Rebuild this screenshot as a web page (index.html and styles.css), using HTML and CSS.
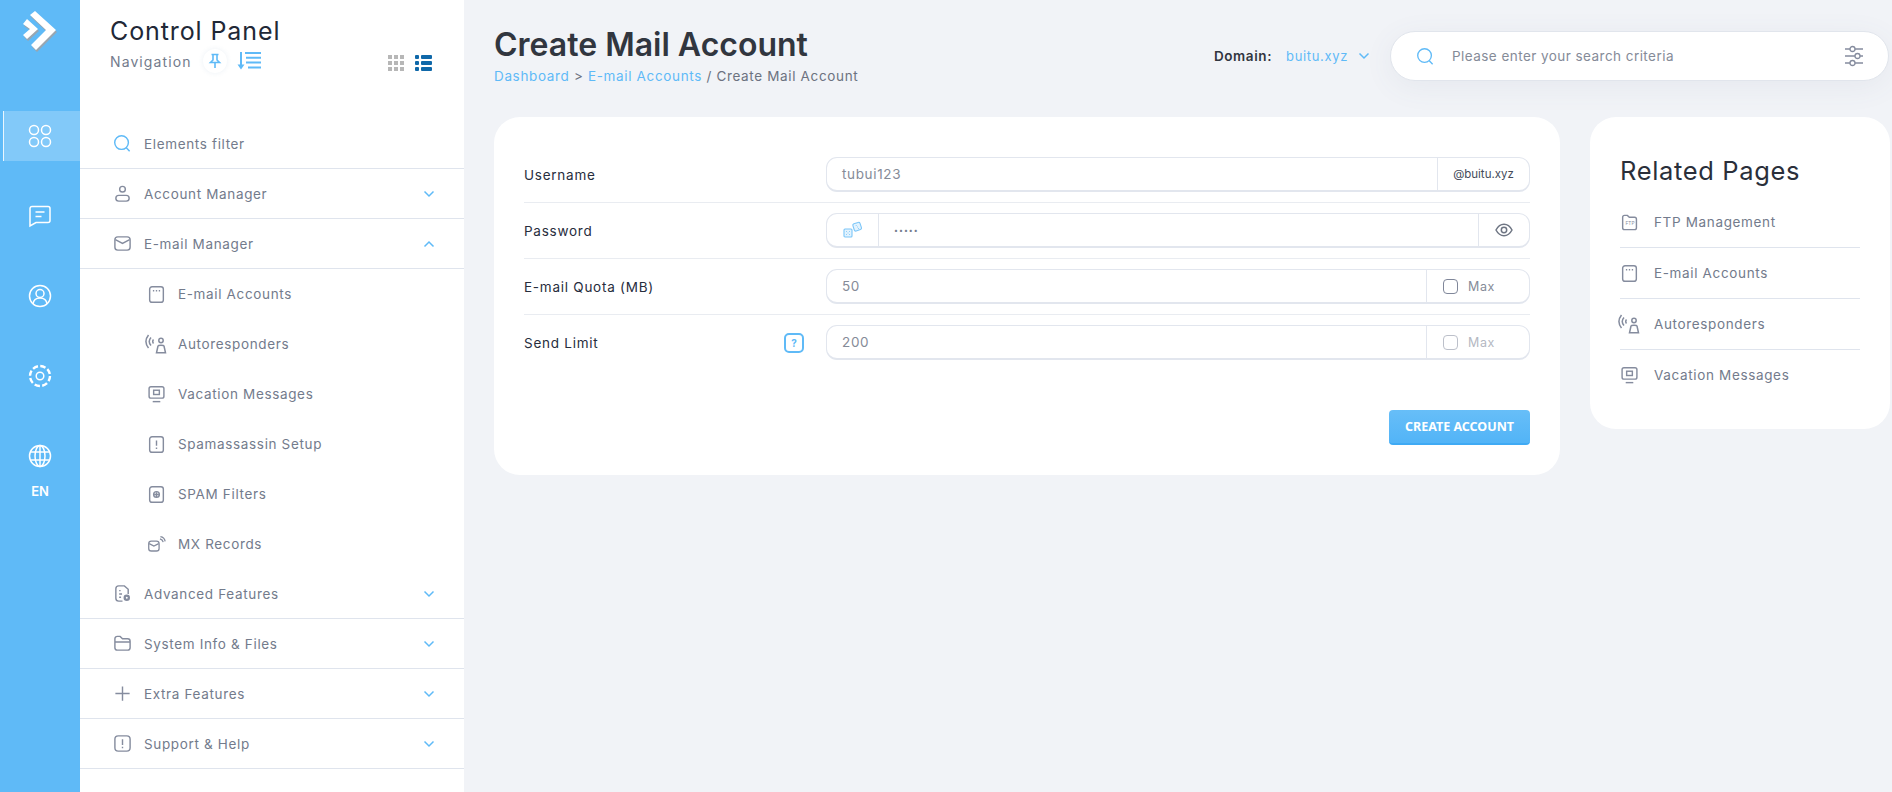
FILE: index.html
```html
<!DOCTYPE html>
<html lang="en">
<head>
    <meta charset="UTF-8">
    <meta name="viewport" content="width=device-width, initial-scale=1.0">
    <title>Create Mail Account</title>
    <link rel="stylesheet" href="styles.css">
</head>
<body>
    <svg class="sprite" xmlns="http://www.w3.org/2000/svg">
        <symbol id="i-search" viewBox="0 0 20 20"><circle cx="9" cy="9" r="7.2"/><path d="M14 14.500l3.500 3.700"/></symbol>
        <symbol id="i-chev" viewBox="0 0 12 8"><path d="M1.500 1.500L6 6l4.500-4.500"/></symbol>
        <symbol id="i-emails" viewBox="0 0 20 20"><rect x="2.800" y="1.800" width="14.400" height="16.400" rx="2.500"/><path class="dots-mark" d="M6.200 6h1.400M9.300 6h1.400M12.400 6h1.400"/></symbol>
        <symbol id="i-auto" viewBox="0 0 22 20"><path d="M3.500 1C.1 5.300.1 9.700 3.500 14M6 3.500C3.800 6 3.800 9 6 11.500M8.500 5.500c-1 1.300-1 2.700 0 4"/><circle cx="16" cy="6.500" r="2.200"/><path d="M13 12c.3-1 5.700-1 6 0l1.500 6.800h-9z"/></symbol>
        <symbol id="i-vacation" viewBox="0 0 20 20"><rect x="2.200" y="1.800" width="15.600" height="12" rx="2"/><rect x="7" y="5.500" width="6" height="4.500"/><path d="M6 17.500h8"/></symbol>
        <symbol id="i-spam" viewBox="0 0 20 20"><rect x="2.800" y="1.800" width="14.400" height="16.400" rx="2.500"/><path d="M10 5.800v5.500M10 13.200v1.500"/></symbol>
        <symbol id="i-filter" viewBox="0 0 20 20"><rect x="2.800" y="1.800" width="14.400" height="16.400" rx="2.500"/><circle cx="10" cy="10" r="3"/><path d="M7.500 10h5M10 7.500v5"/></symbol>
        <symbol id="i-mx" viewBox="0 0 22 20"><rect x="2" y="6" width="12" height="11.500" rx="3"/><path d="M2.500 9l5.500 2.800L13.500 9M15 3.500c2 .4 3.300 1.700 3.800 3.800M15.500 1c3 .5 5 2.500 5.500 5.500"/></symbol>
        <symbol id="i-folder" viewBox="0 0 20 20"><path d="M2.800 4.500a2 2 0 012-2h3l2 2h5.500a2 2 0 012 2v9a2 2 0 01-2 2h-10.500a2 2 0 01-2-2z"/><text x="10.500" y="13" text-anchor="middle" class="ftp-mark">FTP</text></symbol>
    </svg>

    <aside class="rail">
        <div class="rail-logo">
            <svg width="80" height="60" viewBox="0 0 80 60">
                <g fill="#98a6b1" transform="translate(1 2)">
                    <path d="M35 11l21 19-20 20-5-5 15-15-16-15z"/>
                    <path d="M27 19l11 10-11 10-4-4 7-6-7-5z"/>
                </g>
                <path d="M35 11l21 19-20 20-5-5 15-15-16-15z" fill="#fff"/>
                <path d="M27 19l11 10-11 10-4-4 7-6-7-5z" fill="#fff"/>
            </svg>
        </div>
        <a class="rail-item active">
            <svg width="24" height="24" viewBox="0 0 24 24"><circle cx="6" cy="6" r="4.500"/><circle cx="18" cy="6" r="4.500"/><circle cx="6" cy="18" r="4.500"/><circle cx="18" cy="18" r="4.500"/></svg>
        </a>
        <a class="rail-item">
            <svg width="24" height="24" viewBox="0 0 24 24"><path d="M4 2.500h16a2 2 0 012 2v12a2 2 0 01-2 2H8l-6 3.500V4.500a2 2 0 012-2zM7.500 8h9M7.500 12.500h6"/></svg>
        </a>
        <a class="rail-item">
            <svg width="24" height="24" viewBox="0 0 24 24"><circle cx="12" cy="12" r="10.500"/><circle cx="12" cy="9.500" r="4"/><path d="M5 20c.5-4 3-6 7-6s6.500 2 7 6"/></svg>
        </a>
        <a class="rail-item">
            <svg width="24" height="24" viewBox="0 0 24 24"><circle cx="12" cy="12" r="10" stroke-width="2.400" stroke-dasharray="5.500 2.350"/><circle cx="12" cy="12" r="3.800"/></svg>
        </a>
        <a class="rail-item">
            <svg width="24" height="24" viewBox="0 0 24 24"><circle cx="12" cy="12" r="10.500"/><ellipse cx="12" cy="12" rx="5" ry="10.500"/><path d="M12 1.500v21M2.500 8h19M2.500 16h19"/></svg>
        </a>
        <span class="rail-lang">EN</span>
    </aside>

    <nav class="sidebar">
        <div class="side-head">
            <h2>Control Panel</h2>
            <div class="side-sub">
                <span>Navigation</span>
                <span class="pin">
                    <svg width="14" height="16" viewBox="0 0 14 16"><path d="M3.500 1.500h7M5 1.500v5.500L2.500 9.500h9L9 7V1.500M7 9.500V15"/></svg>
                </span>
                <svg class="sort" width="26" height="20" viewBox="0 0 26 20"><path d="M5 1v15"/><path class="sort-head" d="M1.500 13.500h7L5 18.500z"/><path d="M9 2h16M10 6.800h15M10 11.600h15M12 16.400h13"/></svg>
                <div class="views">
                    <div class="view-grid">
                        <i></i><i></i><i></i><i></i><i></i><i></i><i></i><i></i><i></i>
                    </div>
                    <div class="view-list">
                        <i></i><b></b><i></i><b></b><i></i><b></b>
                    </div>
                </div>
            </div>
        </div>
        <ul class="menu">
            <li class="row"><svg class="ic blue"><use href="#i-search"/></svg>Elements filter</li>
            <li class="row">
                <svg class="ic" viewBox="0 0 20 20"><circle cx="10" cy="5.500" r="3"/><rect x="3" y="12" width="14" height="6" rx="3"/></svg>
                Account Manager
                <svg class="chev"><use href="#i-chev"/></svg>
            </li>
            <li class="row">
                <svg class="ic" viewBox="0 0 20 20"><rect x="2" y="3" width="16" height="14" rx="3"/><path d="M2.500 6l7.500 4 7.500-4"/></svg>
                E-mail Manager
                <svg class="chev up"><use href="#i-chev"/></svg>
            </li>
            <li class="sub"><svg class="ic"><use href="#i-emails"/></svg>E-mail Accounts</li>
            <li class="sub"><svg class="ic wide"><use href="#i-auto"/></svg>Autoresponders</li>
            <li class="sub"><svg class="ic"><use href="#i-vacation"/></svg>Vacation Messages</li>
            <li class="sub"><svg class="ic"><use href="#i-spam"/></svg>Spamassassin Setup</li>
            <li class="sub"><svg class="ic"><use href="#i-filter"/></svg>SPAM Filters</li>
            <li class="sub"><svg class="ic"><use href="#i-mx"/></svg>MX Records</li>
            <li class="row">
                <svg class="ic" viewBox="0 0 20 20"><path d="M10 18H6a3 3 0 01-3-3V5a3 3 0 013-3h6l4 3.500v5M6.500 7h1.500M6.500 10.500h3M6.500 14h2"/><circle cx="14.500" cy="14.500" r="2.200" stroke-width="2.400"/></svg>
                Advanced Features
                <svg class="chev"><use href="#i-chev"/></svg>
            </li>
            <li class="row">
                <svg class="ic" viewBox="0 0 20 20"><path d="M2 6V5a2.500 2.500 0 012.500-2.500h3L10 5h5.500A2.500 2.500 0 0118 7.500v7a2.500 2.500 0 01-2.500 2.500h-11A2.500 2.500 0 012 14.500zM2.500 8.500h15"/></svg>
                System Info &amp; Files
                <svg class="chev"><use href="#i-chev"/></svg>
            </li>
            <li class="row">
                <svg class="ic" viewBox="0 0 20 20"><path d="M10 2.500v15M2.500 10h15"/></svg>
                Extra Features
                <svg class="chev"><use href="#i-chev"/></svg>
            </li>
            <li class="row">
                <svg class="ic" viewBox="0 0 20 20"><rect x="2" y="2" width="16" height="16" rx="3.500"/><path d="M10 5.500v6M10 13.500v1.500"/></svg>
                Support &amp; Help
                <svg class="chev"><use href="#i-chev"/></svg>
            </li>
        </ul>
    </nav>

    <main class="main">
        <header class="top">
            <div class="top-title">
                <h1>Create Mail Account</h1>
                <p class="crumbs"><a>Dashboard</a> &gt; <a>E-mail Accounts</a> / Create Mail Account</p>
            </div>
            <div class="top-tools">
                <span class="domain-label">Domain:</span>
                <span class="domain-value">buitu.xyz</span>
                <svg class="chev domain-chev"><use href="#i-chev"/></svg>
                <div class="search">
                    <svg class="search-ic"><use href="#i-search"/></svg>
                    <span class="search-text">Please enter your search criteria</span>
                    <svg class="search-opts" width="20" height="22" viewBox="0 0 20 22"><path d="M1 4h5M11 4h8M1 11h10M16 11h3M1 18h5M11 18h8"/><circle cx="8.500" cy="4" r="2.500"/><circle cx="13.500" cy="11" r="2.500"/><circle cx="8.500" cy="18" r="2.500"/></svg>
                </div>
            </div>
        </header>

        <div class="content">
            <section class="card form-card">
                <div class="form-row">
                    <label class="form-label">Username</label>
                    <div class="field">
                        <span class="field-value">tubui123</span>
                        <span class="addon addon-domain">@buitu.xyz</span>
                    </div>
                </div>
                <div class="form-row">
                    <label class="form-label">Password</label>
                    <div class="field">
                        <span class="addon addon-dice">
                            <svg width="20" height="18" viewBox="0 0 20 18"><rect x="1" y="8" width="8" height="8" rx="1"/><rect x="10.500" y="2" width="7.500" height="7.500" rx="1.500" transform="rotate(-18 14 6)"/><path d="M3 10.500h.8M6.200 10.500h.8M4.600 12h.8M3 13.500h.8M6.200 13.500h.8M12.800 4.500h.8M14 6h.8M15.200 7.500h.8"/></svg>
                        </span>
                        <span class="field-value dots">•••••</span>
                        <span class="addon addon-eye">
                            <svg width="18" height="14" viewBox="0 0 18 14"><path d="M1 7c2-3.800 4.800-5.700 8-5.700S15 3.200 17 7c-2 3.800-4.800 5.700-8 5.700S3 10.800 1 7z"/><circle cx="9" cy="7" r="2.700"/></svg>
                        </span>
                    </div>
                </div>
                <div class="form-row">
                    <label class="form-label">E-mail Quota (MB)</label>
                    <div class="field">
                        <span class="field-value">50</span>
                        <span class="addon addon-max"><i class="check"></i>Max</span>
                    </div>
                </div>
                <div class="form-row">
                    <label class="form-label">Send Limit<span class="help">?</span></label>
                    <div class="field">
                        <span class="field-value">200</span>
                        <span class="addon addon-max off"><i class="check"></i>Max</span>
                    </div>
                </div>
                <div class="form-actions">
                    <button class="btn-create">CREATE ACCOUNT</button>
                </div>
            </section>

            <section class="card related">
                <h3>Related Pages</h3>
                <ul>
                    <li><svg class="ic"><use href="#i-folder"/></svg>FTP Management</li>
                    <li><svg class="ic"><use href="#i-emails"/></svg>E-mail Accounts</li>
                    <li><svg class="ic wide"><use href="#i-auto"/></svg>Autoresponders</li>
                    <li><svg class="ic"><use href="#i-vacation"/></svg>Vacation Messages</li>
                </ul>
            </section>
        </div>
    </main>
</body>
</html>
```

FILE: styles.css
```css
* {
    box-sizing: border-box;
}
html, body {
    height: 100%;
}
body {
    margin: 0;
    display: flex;
    height: 792px;
    overflow: hidden;
    background-color: #f1f3f7;
    font-family: Inter, "Noto Sans", Arial, sans-serif;
    font-size: 13.500px;
    letter-spacing: 0.65px;
    color: #737b8c;
}
ul {
    list-style: none;
    margin: 0;
    padding: 0;
}
h1, h2, h3, p {
    margin: 0;
}
.sprite {
    display: none;
}

/* left blue bar */
.rail {
    width: 80px;
    flex-shrink: 0;
    display: flex;
    flex-direction: column;
    align-items: center;
    background-color: #5fbaf7;
}
.rail-logo {
    height: 111px;
    width: 100%;
}
.rail-item {
    width: 100%;
    height: 50px;
    margin-bottom: 30px;
    display: flex;
    align-items: center;
    justify-content: center;
}
.rail-item svg {
    fill: none;
    stroke: #fff;
    stroke-width: 1.5;
}
.rail-item.active {
    background-color: #82c9f9;
    box-shadow: inset 3px 0 0 #5fbaf7, inset 4px 0 0 #eaf6fe;
}
.rail-lang {
    margin-top: -28px;
    color: #fff;
    font-weight: 600;
    font-size: 13px;
    letter-spacing: 0;
}

/* sidebar */
.sidebar {
    width: 384px;
    flex-shrink: 0;
    background-color: #fff;
}
.side-head {
    height: 119px;
    padding: 14px 30px 0;
}
.side-head h2 {
    font-size: 25px;
    line-height: 34px;
    font-weight: 400;
    letter-spacing: 0.9px;
    color: #212836;
}
.side-sub {
    display: flex;
    align-items: center;
    margin-top: 1px;
    font-size: 14px;
    letter-spacing: 1.100px;
}
.pin {
    width: 24px;
    height: 24px;
    margin-left: 11px;
    border-radius: 50%;
    box-shadow: 0 0 5px rgba(90, 130, 170, 0.12);
    display: flex;
    align-items: center;
    justify-content: center;
}
.pin svg, .sort {
    fill: none;
    stroke: #5fbaf7;
    stroke-width: 1.6;
}
.sort {
    margin-left: 9px;
    stroke-width: 2;
}
.sort-head {
    fill: #5fbaf7;
    stroke: none;
}
.views {
    display: flex;
    gap: 11px;
    margin-left: auto;
    margin-right: 2px;
    margin-top: 4px;
}
.view-grid {
    display: grid;
    grid-template-columns: repeat(3, 4px);
    grid-auto-rows: 4px;
    gap: 2px;
}
.view-grid i {
    background-color: #b7b7b7;
}
.view-list {
    display: grid;
    grid-template-columns: 4px 11px;
    grid-auto-rows: 4px;
    gap: 2px;
}
.view-list i, .view-list b {
    background-color: #0f68a9;
    border-radius: 1px;
}
.row, .sub {
    display: flex;
    align-items: center;
    height: 50px;
}
.row {
    padding: 0 33px;
    border-bottom: 1px solid #dfe4ed;
}
.sub {
    padding-left: 67px;
}
.ic {
    width: 19px;
    height: 19px;
    margin-right: 12px;
    flex-shrink: 0;
    fill: none;
    stroke: #858c9e;
    stroke-width: 1.5;
}
.ic.blue {
    stroke: #5fbaf7;
}
.ic.wide {
    width: 22px;
    height: 20px;
    margin-left: -2px;
    margin-right: 11px;
}
.dots-mark {
    stroke-width: 1.7;
}
.ftp-mark {
    font-size: 5px;
    stroke: none;
    fill: #858c9e;
    letter-spacing: 0;
}
.chev {
    width: 12px;
    height: 8px;
    margin-left: auto;
    margin-right: -4px;
    fill: none;
    stroke: #5fbaf7;
    stroke-width: 1.5;
}
.chev.up {
    transform: rotate(180deg);
}

/* main area */
.main {
    flex: 1;
    min-width: 0;
    padding: 0 2px 0 30px;
}
.top {
    height: 117px;
    display: flex;
    justify-content: space-between;
}
.top-title {
    padding-top: 25px;
}
.top-title h1 {
    font-size: 32px;
    line-height: 40px;
    font-weight: 600;
    letter-spacing: 0;
    color: #31363f;
}
.crumbs {
    margin-top: 3px;
    font-size: 13.500px;
    letter-spacing: 0.65px;
    color: #6c7280;
}
.crumbs a {
    color: #5fbaf7;
}
.top-tools {
    display: flex;
    align-items: center;
    height: 50px;
    margin-top: 31px;
    margin-right: 1px;
}
.domain-label {
    font-weight: 600;
    letter-spacing: 0.6px;
    color: #31363f;
}
.domain-value {
    margin-left: 14px;
    font-size: 13px;
    color: #5fbaf7;
}
.domain-chev {
    margin: 0 20px 0 10px;
}
.search {
    width: 499px;
    height: 50px;
    display: flex;
    align-items: center;
    padding: 0 24px 0 25px;
    background-color: #fff;
    border: 1px solid #e1e5ec;
    border-radius: 25px;
    box-shadow: 0 6px 30px rgba(80, 100, 130, 0.07);
}
.search-ic {
    width: 19px;
    height: 19px;
    fill: none;
    stroke: #5fbaf7;
    stroke-width: 1.4;
}
.search-text {
    margin-left: 17px;
    letter-spacing: 0.45px;
    color: #858b98;
}
.search-opts {
    margin-left: auto;
    fill: none;
    stroke: #858c9e;
    stroke-width: 1.3;
}
.content {
    display: flex;
    gap: 30px;
    align-items: flex-start;
}
.card {
    background-color: #fff;
    border-radius: 26px;
}
.form-card {
    flex: 1;
    min-width: 0;
    padding: 40px 30px 30px 30px;
}
.form-row {
    display: flex;
    padding-bottom: 10px;
    margin-bottom: 10px;
    border-bottom: 1px solid #e9ecf1;
}
.form-row:nth-child(4) {
    border-bottom: 0;
    padding-bottom: 0;
    margin-bottom: 0;
}
.form-label {
    width: 302px;
    flex-shrink: 0;
    padding-right: 22px;
    display: flex;
    align-items: center;
    justify-content: space-between;
    letter-spacing: 0.75px;
    color: #272d3d;
}
.help {
    width: 20px;
    height: 20px;
    border: 2px solid #5fbaf7;
    border-radius: 5px;
    display: flex;
    align-items: center;
    justify-content: center;
    font-size: 10px;
    font-weight: 700;
    letter-spacing: 0;
    color: #5fbaf7;
}
.field {
    flex: 1;
    height: 35px;
    display: flex;
    align-items: stretch;
    border: 1px solid #e2e6ee;
    border-bottom-width: 2px;
    border-radius: 11px;
}
.field-value {
    flex: 1;
    padding-left: 15px;
    display: flex;
    align-items: center;
    color: #858b98;
}
.dots {
    font-size: 7px;
    letter-spacing: 1px;
    color: #737b8c;
}
.addon {
    display: flex;
    align-items: center;
    justify-content: center;
    flex-shrink: 0;
}
.addon-domain {
    width: 92px;
    border-left: 1px solid #e2e6ee;
    font-size: 11.500px;
    letter-spacing: 0;
    color: #444b59;
}
.addon-dice {
    width: 52px;
    border-right: 1px solid #e2e6ee;
}
.addon-dice svg {
    fill: #e3f3fe;
    stroke: #7cc6f8;
    stroke-width: 1.100;
}
.addon-eye {
    width: 51px;
    border-left: 1px solid #e2e6ee;
}
.addon-eye svg {
    fill: none;
    stroke: #6e7583;
    stroke-width: 1.5;
}
.addon-max {
    width: 103px;
    justify-content: flex-start;
    padding-left: 16px;
    border-left: 1px solid #e2e6ee;
    font-size: 12.500px;
    color: #858b98;
}
.check {
    width: 15px;
    height: 15px;
    margin-right: 10px;
    border: 1px solid #80879a;
    border-radius: 4px;
}
.addon-max.off {
    color: #b4b8c2;
}
.addon-max.off .check {
    border-color: #bcc0ca;
}
.form-actions {
    margin-top: 50px;
    display: flex;
    justify-content: flex-end;
}
.btn-create {
    width: 141px;
    height: 35px;
    border: 0;
    border-bottom: 2px solid #3faaf4;
    border-radius: 4px;
    background: linear-gradient(#67bef8, #52b4f7);
    color: #fff;
    font-family: "Noto Sans", Arial, sans-serif;
    font-size: 12.500px;
    font-weight: 700;
    letter-spacing: 0;
}
.related {
    width: 300px;
    flex-shrink: 0;
    height: 312px;
    padding: 36px 30px 0 30px;
}
.related h3 {
    font-size: 25.500px;
    line-height: 36px;
    font-weight: 400;
    letter-spacing: 0.65px;
    color: #2a2f3a;
}
.related ul {
    margin-top: 8px;
}
.related li {
    display: flex;
    align-items: center;
    height: 51px;
    border-bottom: 1px solid #dfe4ed;
}
.related li:last-child {
    height: 50px;
    border-bottom: 0;
}
.related .ic {
    margin-right: 15px;
}
.related .ic.wide {
    margin-right: 14px;
}
```
